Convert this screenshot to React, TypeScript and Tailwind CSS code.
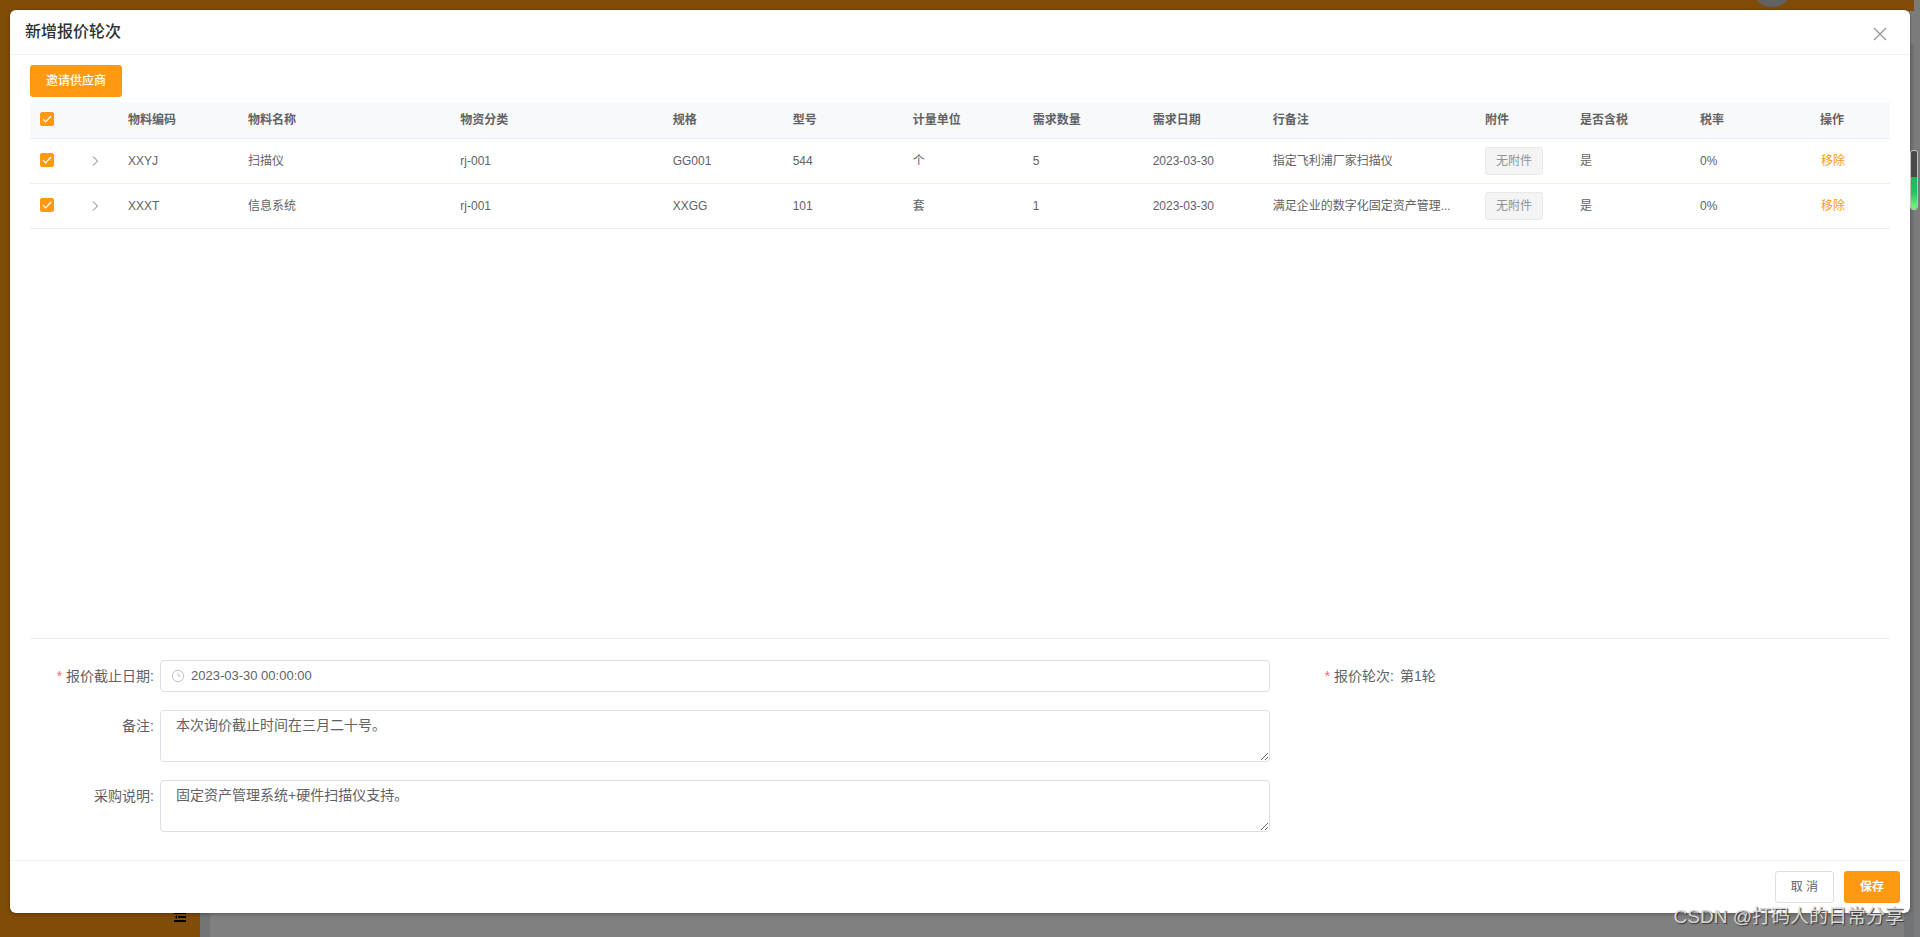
import type { ReactNode } from 'react'

interface IMaterialRow {
  code: string
  name: string
  category: string
  spec: string
  model: string
  unit: string
  quantity: number
  date: string
  remark: string
  hasTax: string
  taxRate: string
}

const columns = [
  '物料编码',
  '物料名称',
  '物资分类',
  '规格',
  '型号',
  '计量单位',
  '需求数量',
  '需求日期',
  '行备注',
  '附件',
  '是否含税',
  '税率',
  '操作',
]

const rows: IMaterialRow[] = [
  {
    code: 'XXYJ',
    name: '扫描仪',
    category: 'rj-001',
    spec: 'GG001',
    model: '544',
    unit: '个',
    quantity: 5,
    date: '2023-03-30',
    remark: '指定飞利浦厂家扫描仪',
    hasTax: '是',
    taxRate: '0%',
  },
  {
    code: 'XXXT',
    name: '信息系统',
    category: 'rj-001',
    spec: 'XXGG',
    model: '101',
    unit: '套',
    quantity: 1,
    date: '2023-03-30',
    remark: '满足企业的数字化固定资产管理...',
    hasTax: '是',
    taxRate: '0%',
  },
]

function CheckBox({ label }: { label: string }) {
  return (
    <span className="relative mb-0.5 block size-3.5">
      <input
        type="checkbox"
        defaultChecked
        aria-label={label}
        className="peer block size-3.5 appearance-none rounded-xs border border-[#dcdfe6] bg-white checked:border-[#ff9912] checked:bg-[#ff9912]"
      />
      <svg
        viewBox="0 0 14 14"
        className="pointer-events-none absolute inset-0 hidden size-3.5 peer-checked:block"
        fill="none"
        stroke="#fff"
        strokeWidth="1.2"
      >
        <path d="M3 7.2 5.6 9.8 11 4" />
      </svg>
    </span>
  )
}

function Cell({ children }: { children: ReactNode }) {
  return <td className="truncate border-b border-[#ebeef5] px-2.5">{children}</td>
}

function MaterialTable() {
  return (
    <table className="w-full table-fixed border-separate border-spacing-0 text-left text-xs text-[#606266]">
      <colgroup>
        <col className="w-10" />
        <col className="w-12" />
        <col className="w-[120px]" />
        <col />
        <col />
        <col className="w-[120px]" />
        <col className="w-[120px]" />
        <col className="w-[120px]" />
        <col className="w-[120px]" />
        <col className="w-[120px]" />
        <col />
        <col className="w-[95px]" />
        <col className="w-[120px]" />
        <col className="w-[120px]" />
        <col className="w-20" />
      </colgroup>
      <thead>
        <tr className="h-[37px] bg-[#f8f9fb]">
          <th className="border-b border-[#ebeef5] pl-2.5">
            <CheckBox label="全选" />
          </th>
          <th className="border-b border-[#ebeef5]" />
          {columns.map((title) => (
            <th key={title} className="border-b border-[#ebeef5] px-2.5 font-bold">
              {title}
            </th>
          ))}
        </tr>
      </thead>
      <tbody>
        {rows.map((row) => (
          <tr key={row.code} className="h-[45px]">
            <td className="border-b border-[#ebeef5] pl-2.5">
              <CheckBox label={row.name} />
            </td>
            <td className="border-b border-[#ebeef5] pl-[19px]">
              <button type="button" aria-label="展开" className="block">
                <svg viewBox="0 0 12 12" className="size-3" fill="none" stroke="#77797d">
                  <path d="M4 1.5 8.5 6 4 10.5" />
                </svg>
              </button>
            </td>
            <Cell>{row.code}</Cell>
            <Cell>{row.name}</Cell>
            <Cell>{row.category}</Cell>
            <Cell>{row.spec}</Cell>
            <Cell>{row.model}</Cell>
            <Cell>{row.unit}</Cell>
            <Cell>{row.quantity}</Cell>
            <Cell>{row.date}</Cell>
            <Cell>{row.remark}</Cell>
            <Cell>
              <button
                type="button"
                disabled
                className="block h-7 rounded-[3px] border border-[#e9e9eb] bg-[#f4f4f5] px-2.5 text-[#909399]"
              >
                无附件
              </button>
            </Cell>
            <Cell>{row.hasTax}</Cell>
            <Cell>{row.taxRate}</Cell>
            <Cell>
              <button type="button" className="px-px text-[#ff9912]">
                移除
              </button>
            </Cell>
          </tr>
        ))}
      </tbody>
    </table>
  )
}

function FieldLabel({
  htmlFor,
  required = false,
  children,
}: {
  htmlFor: string
  required?: boolean
  children: ReactNode
}) {
  return (
    <label
      htmlFor={htmlFor}
      className="w-[130px] shrink-0 pr-1.5 text-right text-sm leading-8 text-[#606266]"
    >
      {required && <span className="mr-1 text-[#f56c6c]">*</span>}
      {children}
    </label>
  )
}

function QuoteForm() {
  return (
    <form className="flex items-start pt-[21px] pb-7">
      <div className="flex w-2/3 flex-col gap-[18px]">
        <div className="flex">
          <FieldLabel htmlFor="deadline" required>
            报价截止日期:
          </FieldLabel>
          <div className="flex h-8 flex-1 items-center rounded border border-[#dcdfe6] pl-2.5">
            <svg viewBox="0 0 14 14" className="size-3.5 shrink-0" fill="none" stroke="#c0c4cc">
              <circle cx="7" cy="7" r="5.7" />
              <path d="M7 3.5V7h3" />
            </svg>
            <input
              id="deadline"
              type="text"
              defaultValue="2023-03-30 00:00:00"
              className="min-w-0 flex-1 pl-1.5 text-[13px] text-[#606266] outline-none"
            />
          </div>
        </div>
        <div className="flex">
          <FieldLabel htmlFor="remark">备注:</FieldLabel>
          <textarea
            id="remark"
            defaultValue="本次询价截止时间在三月二十号。"
            className="h-[52px] flex-1 resize rounded border border-[#dcdfe6] px-[15px] py-1 text-sm text-[#606266] outline-none"
          />
        </div>
        <div className="flex">
          <FieldLabel htmlFor="description">采购说明:</FieldLabel>
          <textarea
            id="description"
            defaultValue="固定资产管理系统+硬件扫描仪支持。"
            className="h-[52px] flex-1 resize rounded border border-[#dcdfe6] px-[15px] py-1 text-sm text-[#606266] outline-none"
          />
        </div>
      </div>
      <div className="flex w-1/3">
        <FieldLabel htmlFor="round" required>
          报价轮次:
        </FieldLabel>
        <output id="round" className="text-sm leading-8 text-[#606266]">
          第1轮
        </output>
      </div>
    </form>
  )
}

// dimmed page that stays visible around the dialog
function Backdrop() {
  return (
    <div className="absolute inset-0 flex bg-[#7b7b7b] pr-1.5">
      <div className="flex flex-1 flex-col bg-[#808080]">
        <div className="relative h-[11px] overflow-hidden bg-[#804d09]">
          <span className="absolute right-[122px] bottom-1 size-10 rounded-full bg-[#606266]" />
        </div>
        <div className="flex flex-1">
          <div className="flex w-[200px] items-end justify-end bg-[#804d09] pr-3.5 pb-[15px]">
            <svg viewBox="0 0 12 10" className="h-2.5 w-3" fill="#000">
              <path d="M0 0h12v2H0zM4 4h8v2H4zM0 8h12v2H0zM3 3v4L1 5z" />
            </svg>
          </div>
          <div className="w-2.5 bg-[#737477]" />
          <div className="flex-1" />
          <div className="mt-[34px] w-2.5 border-t border-[#6c6c6c] bg-[#737477]" />
        </div>
      </div>
    </div>
  )
}

export default function App() {
  return (
    <div className="relative flex h-screen flex-col overflow-hidden px-2.5 pt-2.5 pb-6 font-['Liberation_Sans','Noto_Sans_CJK_SC',sans-serif]">
      <Backdrop />
      <div
        role="dialog"
        aria-labelledby="dialog-title"
        className="relative flex min-h-0 flex-1 flex-col rounded-md bg-white shadow-[0_1px_4px_rgba(0,0,0,0.35)]"
      >
        <header className="flex h-[45px] shrink-0 items-center justify-between border-b border-[#f2f2f2] pr-[23px] pl-[15px]">
          <h1 id="dialog-title" className="text-base font-medium text-[#303133]">
            新增报价轮次
          </h1>
          <button type="button" aria-label="关闭" className="pt-1">
            <svg viewBox="0 0 14 14" className="size-3.5" fill="none" stroke="#909399" strokeWidth="1.2">
              <path d="M1 1l12 12M13 1 1 13" />
            </svg>
          </button>
        </header>
        <main className="flex min-h-0 flex-1 flex-col px-5 pt-2.5">
          <button
            type="button"
            className="h-8 shrink-0 self-start rounded-[3px] bg-[#ff9912] px-4 text-xs font-medium text-white"
          >
            邀请供应商
          </button>
          <div className="mt-[5px] min-h-0 flex-1 overflow-auto border-b border-[#ebeef5]">
            <MaterialTable />
          </div>
          <QuoteForm />
        </main>
        <footer className="flex shrink-0 justify-end gap-2.5 border-t border-[#f2f2f2] p-2.5 text-xs">
          <button
            type="button"
            className="h-8 rounded-[3px] border border-[#dcdfe6] bg-white px-[15px] text-[#606266]"
          >
            取 消
          </button>
          <button type="button" className="h-8 rounded-[3px] bg-[#ff9912] px-4 font-bold text-white">
            保存
          </button>
        </footer>
      </div>
      <div className="absolute top-[150px] right-0.5 h-[60px] w-2 overflow-hidden rounded-[3px] border border-[#c0c0c0] bg-[#4a4a4a]">
        <div className="mt-[26px] h-8 bg-linear-to-b from-[#1cb85a] via-[#20c560] to-[#7df27d]" />
      </div>
      <p className="absolute right-4 bottom-1.5 text-[19px] leading-7 text-[#d8d8d8] [text-shadow:1px_1px_1px_#333]">
        CSDN @打码人的日常分享
      </p>
    </div>
  )
}
